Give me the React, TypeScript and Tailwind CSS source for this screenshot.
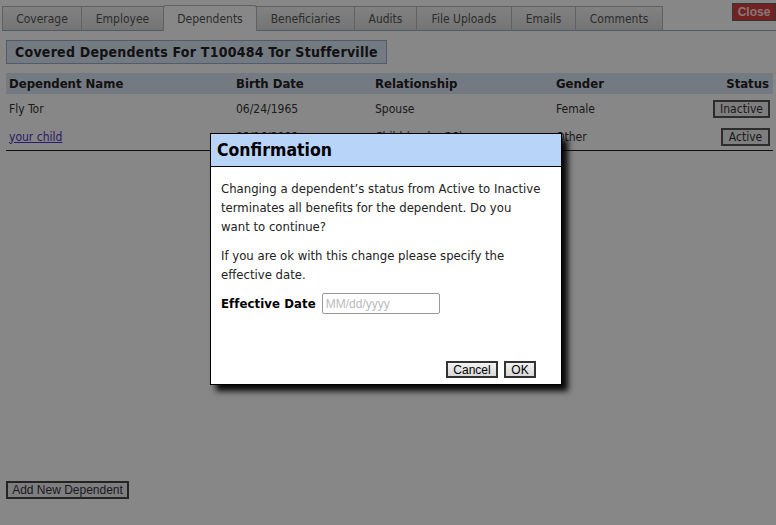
import React from "react";

const tabs = ["Coverage", "Employee", "Dependents", "Beneficiaries", "Audits", "File Uploads", "Emails", "Comments"];
const tabW = [80, 83, 94, 99, 63, 96, 65, 88];

const font = { fontFamily: "'DejaVu Sans Condensed', 'Noto Sans', sans-serif" };
const arial = { fontFamily: "'Liberation Sans', Arial, sans-serif" };

export default function App() {
  return (
    <div className="relative h-[525px] w-[776px] overflow-hidden bg-white text-[12px] text-[#333]" style={font}>
      {/* Tabs */}
      <div className="flex items-end pl-[2px] pt-[5px]">
        {tabs.map((t, i) => {
          const active = t === "Dependents";
          return (
            <div
              key={t}
              style={{ width: tabW[i] }}
              className={
                active
                  ? "-ml-px flex h-[26px] items-center justify-center rounded-t-[3px] border border-b-0 border-[#b8b8b8] bg-white text-[#555]"
                  : "-ml-px flex h-[25px] items-center justify-center border border-[#b8b8b8] border-b-[#9aa8bb] bg-gradient-to-b from-[#f4f4f4] to-[#dcdcdc] text-[#555] first:ml-0"
              }
            >
              {t}
            </div>
          );
        })}
        <div className="h-[25px] flex-1 border-b border-[#9aa8bb]" />
      </div>
      <button
        className="absolute right-0 top-[3px] flex h-[18px] w-[44px] items-center justify-center border border-[#666] bg-[#d94040] text-[12px] font-bold leading-none text-[#ffe0e0]"
        style={arial}
      >
        Close
      </button>

      {/* Header box */}
      <div className="ml-[6px] mt-[9px] inline-flex h-[24px] items-center border border-[#9aaccc] bg-[#dce6f6] px-[8px] text-[14px] font-bold tracking-[0.25px] text-[#222]">
        Covered Dependents For T100484 Tor Stufferville
      </div>

      {/* Table */}
      <div className="ml-[6px] mt-[9px] w-[767px]">
        <div className="grid h-[21px] grid-cols-[227px_139px_181px_1fr_auto] items-center bg-[#dce6f6] px-[3px] text-[13px] font-bold text-[#222]">
          <div>Dependent Name</div>
          <div>Birth Date</div>
          <div>Relationship</div>
          <div>Gender</div>
          <div className="pr-[1px]">Status</div>
        </div>
        <div className="grid h-[29px] grid-cols-[227px_139px_181px_1fr_auto] items-center px-[3px] pt-px text-[#333]">
          <div>Fly Tor</div>
          <div>06/24/1965</div>
          <div>Spouse</div>
          <div>Female</div>
          <button className="flex h-[18px] w-[57px] items-center justify-center border-2 border-[#555] bg-[#eee] text-[12px] leading-none text-[#333]">
            Inactive
          </button>
        </div>
        <div className="grid h-[28px] grid-cols-[227px_139px_181px_1fr_auto] items-center border-b border-[#222] px-[3px] text-[#333]">
          <div className="text-[#4b35c9] underline">your child</div>
          <div>08/16/2008</div>
          <div>Child (under 26)</div>
          <div>Other</div>
          <button className="flex h-[18px] w-[49px] items-center justify-center border-2 border-[#555] bg-[#eee] text-[12px] leading-none text-[#333]">
            Active
          </button>
        </div>
      </div>

      <button
        className="absolute left-[6px] top-[481px] flex h-[18px] w-[123px] items-center justify-center border-2 border-[#444] bg-[#eee] text-[12px] leading-none text-[#334]"
        style={arial}
      >
        Add New Dependent
      </button>

      {/* Overlay */}
      <div className="absolute inset-0 bg-black/[0.47]" />

      {/* Modal */}
      <div className="absolute left-[210px] top-[133px] flex h-[252px] w-[352px] flex-col border border-black bg-white shadow-[6px_6px_6px_rgba(0,0,0,0.95)]">
        <div className="flex h-[33px] items-center border-b border-black bg-[#b9d4f9] px-[6px] text-[17.5px] font-bold text-black">
          Confirmation
        </div>
        <div className="flex flex-1 flex-col px-[10px] pt-[12px] text-[13px] leading-[19px] text-[#222]">
          <p className="whitespace-nowrap">
            Changing a dependent’s status from Active to Inactive
            <br />
            terminates all benefits for the dependent. Do you
            <br />
            want to continue?
          </p>
          <p className="mt-[10px] whitespace-nowrap">
            If you are ok with this change please specify the
            <br />
            effective date.
          </p>
          <div className="mt-[9px] flex items-center gap-[6px]">
            <span className="font-bold tracking-[0.1px] text-black">Effective Date</span>
            <input
              placeholder="MM/dd/yyyy"
              className="h-[21px] w-[118px] rounded-[2px] border border-[#999] px-[3px] text-[12px] placeholder:text-[#bbb]"
              style={arial}
            />
          </div>
          <div className="mb-[6px] mt-auto flex justify-end gap-[6px] pr-[15px]">
            <button
              className="flex h-[17px] w-[52px] items-center justify-center border-2 border-[#333] bg-gradient-to-b from-[#f2f2f2] to-[#d8d8d8] text-[12px] leading-none text-black"
              style={arial}
            >
              Cancel
            </button>
            <button
              className="flex h-[17px] w-[32px] items-center justify-center border-2 border-[#333] bg-gradient-to-b from-[#f2f2f2] to-[#d8d8d8] text-[12px] leading-none text-black"
              style={arial}
            >
              OK
            </button>
          </div>
        </div>
      </div>
    </div>
  );
}
